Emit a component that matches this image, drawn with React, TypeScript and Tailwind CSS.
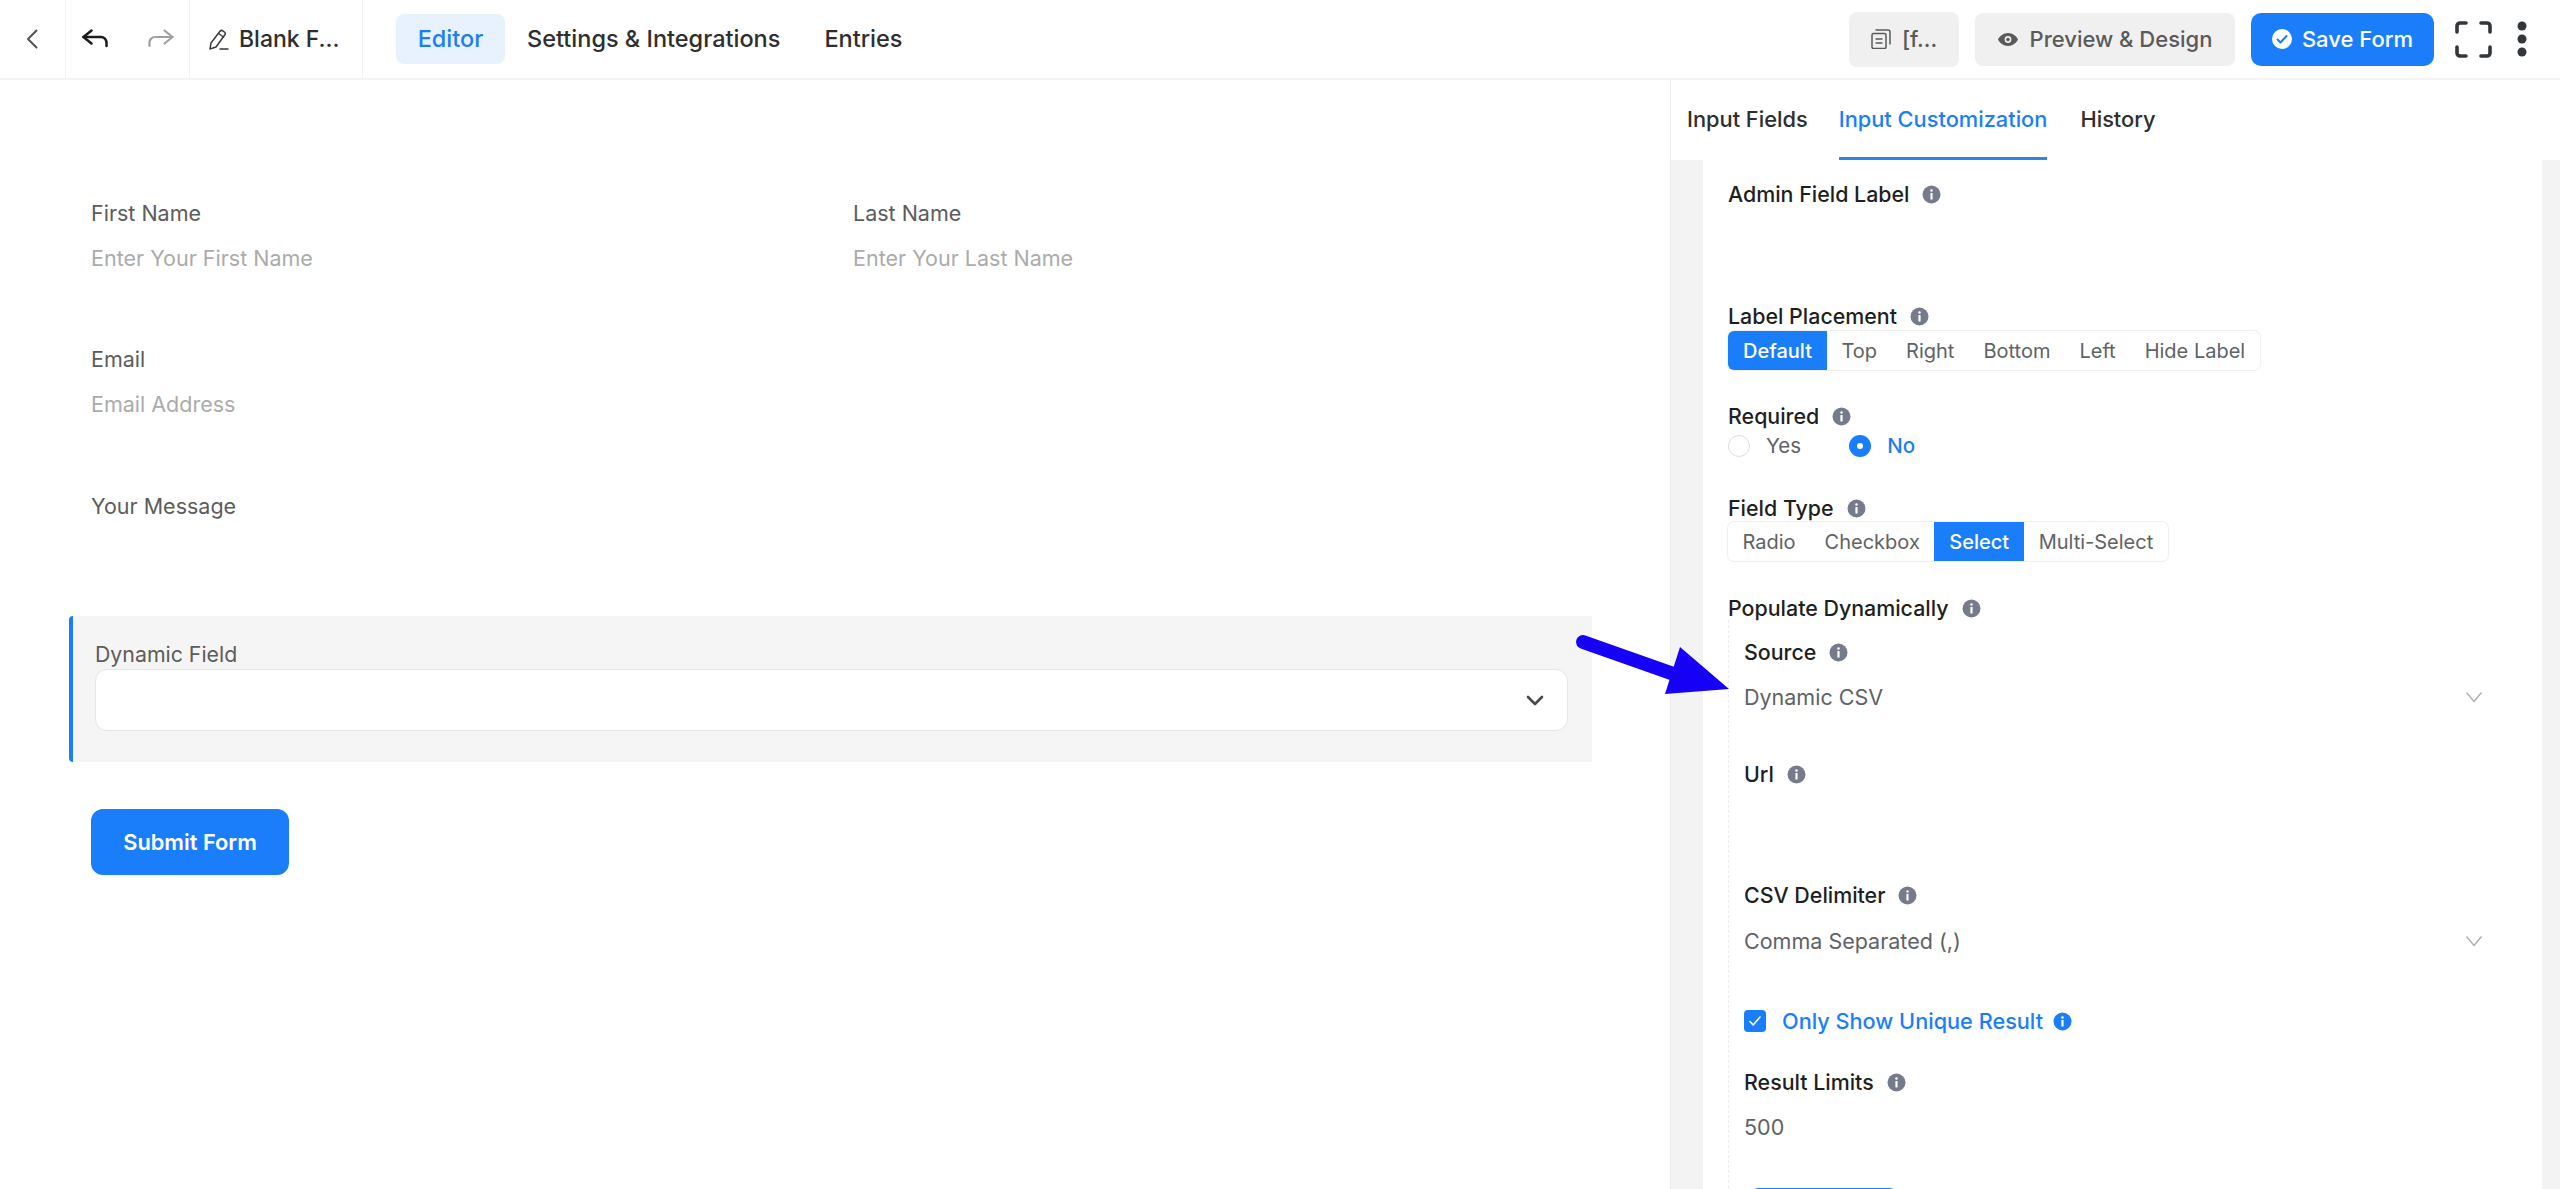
function Info({ blue }: { blue?: boolean }) {
  return (
    <svg width="19" height="19" viewBox="0 0 19 19" className="shrink-0">
      <circle cx="9.5" cy="9.5" r="9" fill={blue ? '#1a7efb' : '#767b8c'} />
      <circle cx="9.5" cy="5.5" r="1.3" fill="#fff" />
      <rect x="8.4" y="8" width="2.2" height="6.5" rx="0.6" fill="#fff" />
    </svg>
  );
}

function Label({ text, className }: { text: string; className?: string }) {
  return (
    <div className={`flex h-[24px] items-center gap-[13px] text-[21.4px] font-medium leading-[24px] text-[#1e1f21] ${className ?? ''}`}>
      <span>{text}</span>
      <Info />
    </div>
  );
}

function Segmented({ items, active, className }: { items: string[]; active: string; className?: string }) {
  return (
    <div className={`flex h-[39px] w-fit rounded-[6px] text-[20px] text-[#606266] ring-1 ring-[#f0f0f0] ${className ?? ''}`}>
      {items.map((item) => (
        <div
          key={item}
          className={
            item === active
              ? 'flex items-center bg-[#1a7efb] px-[15px] font-medium text-white first:rounded-l-[6px]'
              : 'flex items-center px-[14.5px]'
          }
        >
          {item}
        </div>
      ))}
    </div>
  );
}

function ThinChevron() {
  return (
    <svg width="18" height="12" viewBox="0 0 18 12" fill="none" stroke="#a8abb2" strokeWidth="1.3">
      <path d="M1.5 1.5 9 10.5l7.5-9" />
    </svg>
  );
}

function FormField({ label, placeholder, className }: { label: string; placeholder?: string; className?: string }) {
  return (
    <div className={className}>
      <div className="h-[24px] text-[21.5px] leading-[24px] text-[#5c5c5c]">{label}</div>
      {placeholder && <div className="mt-[21px] h-[24px] text-[21.5px] leading-[24px] text-[#ababab]">{placeholder}</div>}
    </div>
  );
}

export default function App() {
  return (
    <div className="relative flex h-[1189px] w-[2560px] flex-col overflow-hidden bg-white font-['Inter',sans-serif]">
      {/* top bar */}
      <header className="flex h-[80px] shrink-0 items-center border-b-2 border-[#f4f4f4]">
        <div className="flex h-full w-[66px] items-center justify-center border-r border-[#f2f2f2]">
          <svg width="13" height="20" viewBox="0 0 13 20" fill="none" stroke="#555" strokeWidth="2" strokeLinecap="round" strokeLinejoin="round">
            <path d="M10.500 1.500 2 10l8.500 8.500" />
          </svg>
        </div>
        <div className="flex h-full w-[124px] items-center gap-[40px] border-r border-[#f2f2f2] pl-[16px]">
          <svg className="mb-[2px]" width="26" height="19" viewBox="0 0 26 19" fill="none" stroke="#1c1c1c" strokeWidth="2.5" strokeLinecap="round" strokeLinejoin="round">
            <path d="M9.500 1.500 1.500 8l8 6.500" />
            <path d="M1.500 8H19a5.500 5.500 0 0 1 5.500 5.500V17" />
          </svg>
          <svg className="mb-[2px]" width="26" height="19" viewBox="0 0 26 19" fill="none" stroke="#a0a0a0" strokeWidth="2.200" strokeLinecap="round" strokeLinejoin="round">
            <path d="M16.500 1.500 24.500 8l-8 6.500" />
            <path d="M24.500 8H7a5.500 5.500 0 0 0-5.500 5.500V17" />
          </svg>
        </div>
        <div className="flex h-full w-[173px] items-center gap-[10px] border-r border-[#f2f2f2] pl-[19px] text-[23px] font-medium text-[#2e2e2e]">
          <svg width="20" height="21" viewBox="0 0 20 21" fill="none" stroke="#3a3a3a" strokeWidth="1.500" strokeLinecap="round" strokeLinejoin="round">
            <path d="M1 20l1-6L11 2.300c.7-.9 1.800-1.100 2.700-.5l1.700 1.200c.9.7 1.100 1.800.5 2.700L7 18Z" />
            <path d="M9.500 4.500 14.500 8" />
            <path d="M11 20h8" />
          </svg>
          <span>Blank F...</span>
        </div>
        <nav className="ml-[33px] flex h-[50px] items-center text-[23.5px] font-medium text-[#2e2e2e]">
          <div className="flex h-full w-[109px] items-center justify-center rounded-[8px] bg-[#e8f2ff] text-[#1a7efb]">Editor</div>
          <div className="ml-[22px]">Settings &amp; Integrations</div>
          <div className="ml-[44px]">Entries</div>
        </nav>
        <div className="ml-auto flex items-center">
          <div className="flex h-[55px] w-[110px] items-center justify-center gap-[11px] rounded-[8px] bg-[#f0f0f0] text-[22px] font-medium text-[#5a5a5a]">
            <svg width="20" height="20" viewBox="0 0 20 20" fill="none" stroke="#5a5a5a" strokeWidth="1.500" strokeLinejoin="round">
              <rect x="1" y="4.500" width="14" height="15" rx="1.500" />
              <path d="M4.500 1h12.500a2 2 0 0 1 2 2v12.500" />
              <path d="M4.500 10h7M4.500 14h7" />
            </svg>
            <span>[f...</span>
          </div>
          <div className="ml-[16px] flex h-[53px] w-[260px] items-center justify-center gap-[12px] rounded-[8px] bg-[#f0f0f0] text-[22px] font-medium text-[#5a5a5a]">
            <svg width="20" height="13" viewBox="0 0 20 13">
              <path d="M10 0c4.800 0 8.300 3.200 10 6.500-1.700 3.300-5.200 6.500-10 6.500S1.700 9.800 0 6.500C1.700 3.200 5.200 0 10 0Z" fill="#5a5a5a" />
              <circle cx="10" cy="6.500" r="3.400" fill="#f0f0f0" />
              <circle cx="10" cy="6.500" r="1.800" fill="#5a5a5a" />
            </svg>
            <span>Preview &amp; Design</span>
          </div>
          <div className="ml-[16px] flex h-[53px] w-[183px] items-center justify-center gap-[10px] rounded-[10px] bg-[#1a7efb] text-[22px] font-medium text-white">
            <svg width="20" height="20" viewBox="0 0 20 20" fill="none">
              <circle cx="10" cy="10" r="10" fill="#fff" />
              <path d="m5.500 10.500 3 3 6-6.500" stroke="#1a7efb" strokeWidth="2" strokeLinecap="round" strokeLinejoin="round" />
            </svg>
            <span>Save Form</span>
          </div>
          <svg className="ml-[21px]" width="37" height="37" viewBox="0 0 37 37" fill="none" stroke="#33363b" strokeWidth="3.600" strokeLinecap="round" strokeLinejoin="round">
            <path d="M2 11V5a3 3 0 0 1 3-3h6M26 2h6a3 3 0 0 1 3 3v6M35 26v6a3 3 0 0 1-3 3h-6M11 35H5a3 3 0 0 1-3-3v-6" />
          </svg>
          <svg className="ml-[25px] mr-[33px]" width="10" height="36" viewBox="0 0 10 36" fill="#33363b">
            <circle cx="5" cy="5" r="4.500" />
            <circle cx="5" cy="18" r="4.500" />
            <circle cx="5" cy="31" r="4.500" />
          </svg>
        </div>
      </header>

      <div className="flex min-h-0 flex-1">
        {/* form canvas */}
        <main className="w-[1670px] shrink-0 pl-[69px] pt-[121px]">
          <div className="flex pl-[22px]">
            <FormField className="w-[762px]" label="First Name" placeholder="Enter Your First Name" />
            <FormField label="Last Name" placeholder="Enter Your Last Name" />
          </div>
          <FormField className="mt-[77px] pl-[22px]" label="Email" placeholder="Email Address" />
          <FormField className="mt-[78px] pl-[22px]" label="Your Message" />
          <div className="mt-[98px] h-[146px] w-[1523px] rounded-l-[4px] border-l-4 border-[#1a7efb] bg-[#f5f5f5] pl-[22px] pt-[26px]">
            <div className="h-[24px] text-[21.3px] leading-[24px] text-[#5c5c5c]">Dynamic Field</div>
            <div className="mt-[3px] flex h-[62px] w-[1473px] items-center justify-end rounded-[12px] border border-[#e6e6e6] bg-white pr-[23px]">
              <svg width="18" height="11" viewBox="0 0 18 11" fill="none" stroke="#4a4a4a" strokeWidth="2.600" strokeLinecap="round" strokeLinejoin="round">
                <path d="m2 2 7 7 7-7" />
              </svg>
            </div>
          </div>
          <div className="ml-[22px] mt-[47px] flex h-[66px] w-[198px] items-center justify-center rounded-[12px] bg-[#1a7efb] text-[21.8px] font-semibold text-white">
            Submit Form
          </div>
        </main>

        {/* settings panel */}
        <aside className="flex w-[890px] shrink-0 flex-col border-l border-[#ededed]">
          <div className="flex h-[80px] shrink-0 items-start pl-[16px] text-[21.8px] font-medium text-[#2e2e2e]">
            <div className="mt-[26px] leading-[26px]">Input Fields</div>
            <div className="ml-[31px] h-[80px] border-b-[3px] border-[#2f84e8] pt-[26px] leading-[26px] text-[#1a7efb]">Input Customization</div>
            <div className="ml-[33px] mt-[26px] leading-[26px]">History</div>
          </div>
          <div className="flex min-h-0 flex-1">
            <div className="w-[32px] shrink-0 bg-[#f3f3f3]" />
            <div className="min-w-0 flex-1 overflow-hidden pl-[25px] pt-[22px]">
              <Label text="Admin Field Label" />
              <Label className="mt-[98px]" text="Label Placement" />
              <Segmented className="mt-[3px]" items={['Default', 'Top', 'Right', 'Bottom', 'Left', 'Hide Label']} active="Default" />
              <Label className="mt-[34px]" text="Required" />
              <div className="mt-[6px] flex h-[24px] items-center text-[20.500px] text-[#606266]">
                <span className="h-[22px] w-[22px] rounded-full border border-[#dcdfe6] bg-white" />
                <span className="ml-[16px]">Yes</span>
                <span className="ml-[48px] flex h-[22px] w-[22px] items-center justify-center rounded-full bg-[#1a7efb]">
                  <span className="h-[6px] w-[6px] rounded-full bg-white" />
                </span>
                <span className="ml-[16px] font-medium text-[#1a7efb]">No</span>
              </div>
              <Label className="mt-[38px]" text="Field Type" />
              <Segmented className="mt-[2px]" items={['Radio', 'Checkbox', 'Select', 'Multi-Select']} active="Select" />
              <Label className="mt-[35px]" text="Populate Dynamically" />
              <div className="border-l border-dashed border-[#ededed] pl-[15px] pt-[20px]">
                <Label text="Source" />
                <div className="mt-[21px] flex h-[24px] items-center justify-between pr-[59px] text-[21.5px] text-[#606266]">
                  <span>Dynamic CSV</span>
                  <ThinChevron />
                </div>
                <Label className="mt-[53px]" text="Url" />
                <Label className="mt-[97px]" text="CSV Delimiter" />
                <div className="mt-[22px] flex h-[24px] items-center justify-between pr-[59px] text-[21.5px] text-[#606266]">
                  <span>Comma Separated (,)</span>
                  <ThinChevron />
                </div>
                <div className="mt-[57px] flex h-[22px] items-center text-[21.7px] font-medium text-[#1a7efb]">
                  <span className="flex h-[22px] w-[22px] items-center justify-center rounded-[4px] bg-[#1a7efb]">
                    <svg width="14" height="12" viewBox="0 0 14 12" fill="none" stroke="#fff" strokeWidth="1.600" strokeLinecap="round" strokeLinejoin="round">
                      <path d="m2 6.500 3.200 3.500L12 2" />
                    </svg>
                  </span>
                  <span className="ml-[16px]">Only Show Unique Result</span>
                  <span className="ml-[10px]"><Info blue /></span>
                </div>
                <Label className="mt-[38px]" text="Result Limits" />
                <div className="mt-[21px] h-[24px] text-[21.5px] leading-[24px] text-[#606266]">500</div>
                <div className="ml-[5px] mt-[49px] h-[60px] w-[150px] rounded-[10px] bg-[#1a7efb]" />
              </div>
            </div>
            <div className="w-[18px] shrink-0 bg-[#f3f3f3]" />
          </div>
        </aside>
      </div>

      {/* annotation arrow drawn over the screenshot */}
      <svg className="absolute left-[1570px] top-[630px]" width="170" height="75" viewBox="0 0 170 75">
        <path d="M13 12 115 48" stroke="#1600f5" strokeWidth="14" strokeLinecap="round" fill="none" />
        <path d="M110 17 159 59 95 64Z" fill="#1600f5" />
      </svg>
    </div>
  );
}
